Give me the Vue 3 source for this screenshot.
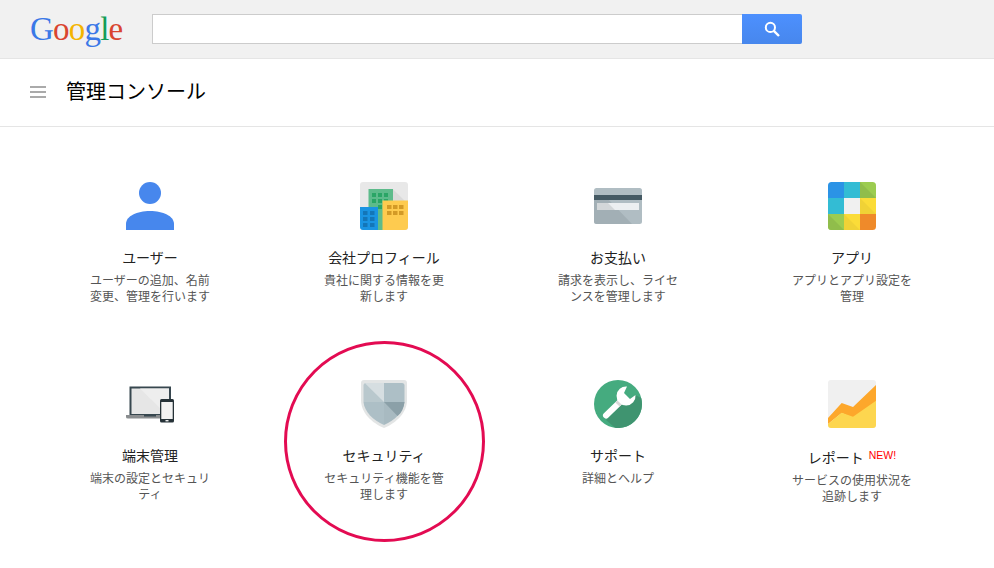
<template>
  <div class="page">
    <header class="top-bar">
      <div class="logo">
        <span class="blue">G</span><span class="red">o</span><span class="yellow">o</span><span class="blue">g</span><span class="green">l</span><span class="red">e</span>
      </div>
      <div class="search">
        <input class="search-input" type="text" />
        <button class="search-btn" type="button" aria-label="検索">
          <svg width="16" height="16" viewBox="0 0 16 16">
            <circle cx="6.4" cy="6.4" r="4.6" fill="none" stroke="#fff" stroke-width="2" />
            <path d="M9.8 9.8 L15 15" stroke="#fff" stroke-width="2.4" />
          </svg>
        </button>
      </div>
    </header>

    <div class="title-bar">
      <div class="menu-icon"><i></i><i></i><i></i></div>
      <h1 class="page-title">管理コンソール</h1>
    </div>

    <main class="grid">
      <a v-for="card in cards" :key="card.id" class="card" :class="{ highlighted: card.id === 'security' }">
        <svg class="icon" width="48" height="48" viewBox="0 0 48 48">
          <template v-if="card.id === 'users'">
            <circle cx="24" cy="11" r="11" fill="#4787ed" />
            <path d="M0 48 V42 C0 34 11 29 24 29 S48 34 48 42 V48 Z" fill="#4787ed" />
          </template>

          <template v-else-if="card.id === 'company'">
            <rect width="48" height="48" rx="3" fill="#e8e8e8" />
            <path d="M32.7 7 L48 22 V30 H30 Z" fill="#dadada" />
            <rect x="8.5" y="7" width="24.5" height="41" fill="#5dbb8b" />
            <g fill="#2aa566">
              <rect x="12" y="11" width="4" height="4" /><rect x="18" y="11" width="4" height="4" /><rect x="24" y="11" width="4" height="4" />
              <rect x="12" y="17" width="4" height="4" /><rect x="18" y="17" width="4" height="4" /><rect x="24" y="17" width="4" height="4" />
              <rect x="18" y="23" width="4" height="4" />
            </g>
            <path d="M0 25 H18 V48 H3 Q0 48 0 45 Z" fill="#1a94e2" />
            <g fill="#1376b8">
              <rect x="3" y="29" width="4.500" height="4" /><rect x="10" y="29" width="4.500" height="4" />
              <rect x="3" y="35" width="4.500" height="4" /><rect x="10" y="35" width="4.500" height="4" />
              <rect x="3" y="41" width="4.500" height="4" /><rect x="10" y="41" width="4.500" height="4" />
            </g>
            <path d="M22.500 18.500 H48 V45 Q48 48 45 48 H22.500 Z" fill="#fecb4f" />
            <g fill="#d39a26">
              <rect x="27" y="23" width="4.500" height="4" /><rect x="33" y="23" width="4.500" height="4" /><rect x="39" y="23" width="4.500" height="4" />
              <rect x="27" y="29" width="4.500" height="4" /><rect x="33" y="29" width="4.500" height="4" /><rect x="39" y="29" width="4.500" height="4" />
            </g>
          </template>

          <template v-else-if="card.id === 'billing'">
            <rect y="6" width="48" height="36" rx="2.500" fill="#b0bdc3" />
            <path d="M0 13 H10 L38 42 H3 Q0 42 0 39 Z" fill="#a2afb5" />
            <rect y="13" width="48" height="5" fill="#455a64" />
            <rect x="3" y="21" width="42" height="7" fill="#eceff1" />
            <path d="M3 21 H14 L21 28 H3 Z" fill="#d3d7d9" />
          </template>

          <template v-else-if="card.id === 'apps'">
            <clipPath id="apps-clip"><rect width="48" height="48" rx="3.500" /></clipPath>
            <g clip-path="url(#apps-clip)">
              <rect width="16" height="16" fill="#2b93e6" />
              <rect x="16" width="16" height="16" fill="#33bcd4" />
              <rect x="32" width="16" height="16" fill="#9ccc50" />
              <rect y="16" width="16" height="16" fill="#33bcd4" />
              <rect x="16" y="16" width="16" height="16" fill="#f0f0f0" />
              <rect x="32" y="16" width="16" height="16" fill="#fbdc38" />
              <rect y="32" width="16" height="16" fill="#9ccc50" />
              <rect x="16" y="32" width="16" height="16" fill="#fbdc38" />
              <rect x="32" y="32" width="16" height="16" fill="#ef8a2a" />
              <path d="M32 0 L48 16 H32 Z M0 32 L16 48 H0 Z" fill="#90bd4b" />
              <path d="M32 16 L48 32 H32 Z M16 32 L32 48 H16 Z" fill="#f0d236" />
            </g>
          </template>

          <template v-else-if="card.id === 'devices'">
            <rect x="3.500" y="6.500" width="41.500" height="29" fill="#37474f" />
            <rect x="5.500" y="8.500" width="37.500" height="25.500" fill="#e6e6e6" />
            <path d="M14 8.500 H43 V34 H40 Z" fill="#eeeeee" />
            <path d="M0 35 H38 V38.500 H2 Q0 38.500 0 37 Z" fill="#8a8d8f" />
            <rect x="18" y="35" width="12" height="1.500" fill="#37474f" />
            <rect x="34" y="19" width="14" height="23.500" rx="1.500" fill="#263238" />
            <rect x="35.300" y="22" width="11.400" height="17" fill="#f2f2f2" />
            <rect x="39.500" y="40" width="3" height="1.400" fill="#eee" />
          </template>

          <template v-else-if="card.id === 'security'">
            <path d="M4 0 H44 Q47 0 47 3 V20 C47 33 36 43 24 48 C12 43 1 33 1 20 V3 Q1 0 4 0 Z" fill="#e3e5e5" />
            <path d="M24 3 H6 Q3.500 3 3.500 5.500 V22 H24 Z" fill="#b9c8cd" />
            <path d="M5 3.300 L24 22 V3 H6 Z" fill="#d6dee1" />
            <path d="M24 3 H42 Q44.500 3 44.500 5.500 V22 H24 Z" fill="#adbfc6" />
            <path d="M3.500 22 H24 V45 C13 40 4.500 32 3.500 22 Z" fill="#adbfc6" />
            <path d="M24 22 H44.500 C43.500 32 35 40 24 45 Z" fill="#a8bac1" />
            <path d="M24 22 H44.500 C43.800 28 41.500 33 37.500 36 Z" fill="#8ba0a8" />
          </template>

          <template v-else-if="card.id === 'support'">
            <circle cx="24" cy="24" r="24" fill="#45ab7f" />
            <path d="M12 40 L27 25 L38 22 L41 15 L47.200 18 A24 24 0 0 1 21 47.800 Z" fill="#3f9470" />
            <path d="M12 35.500 L27 21" stroke="#fff" stroke-width="6" stroke-linecap="round" />
            <path d="M33 6.500 A9.500 9.500 0 1 0 41.500 15 L36 19 L30 13 Z" fill="#fff" />
            <path d="M23.500 24.500 L25.500 22.500" stroke="#d8d8d8" stroke-width="6" />
          </template>

          <template v-else>
            <rect width="48" height="48" rx="3" fill="#f0f0f0" />
            <path d="M0 38 L13.700 23 L25 27 L48 5 V22 L25 38 L13.700 33 L0 44 Z" fill="#fda72b" />
            <path d="M0 44 L13.700 32.700 L25 36.700 L48 20.700 V45 Q48 48 45 48 H3 Q0 48 0 45 Z" fill="#fdd64f" />
          </template>
        </svg>
        <h2 class="card-title" :class="{ 'has-new': card.isNew }">{{ card.title }}<sup v-if="card.isNew" class="new">NEW!</sup></h2>
        <p class="card-desc">{{ card.desc }}</p>
      </a>
    </main>
  </div>
</template>

<script setup>
const cards = [
  { id: 'users', title: 'ユーザー', desc: 'ユーザーの追加、名前変更、管理を行います' },
  { id: 'company', title: '会社プロフィール', desc: '貴社に関する情報を更新します' },
  { id: 'billing', title: 'お支払い', desc: '請求を表示し、ライセンスを管理します' },
  { id: 'apps', title: 'アプリ', desc: 'アプリとアプリ設定を管理' },
  { id: 'devices', title: '端末管理', desc: '端末の設定とセキュリティ' },
  { id: 'security', title: 'セキュリティ', desc: 'セキュリティ機能を管理します' },
  { id: 'support', title: 'サポート', desc: '詳細とヘルプ' },
  { id: 'reports', title: 'レポート', desc: 'サービスの使用状況を追跡します', isNew: true },
]
</script>

<style>
html,
body {
  margin: 0;
  background: #fff;
}
</style>

<style scoped>
.page {
  font-family: "Liberation Sans", "Noto Sans CJK JP", sans-serif;
  color: #222;
}

.top-bar {
  height: 58px;
  display: flex;
  align-items: center;
  background: #f1f1f1;
  border-bottom: 1px solid #e5e5e5;
}

.logo {
  width: 122px;
  margin-left: 30px;
  font-family: "Liberation Serif", serif;
  font-size: 33px;
  line-height: 58px;
  letter-spacing: -0.8px;
  white-space: nowrap;
}

.blue { color: #3b78e7; }
.red { color: #d9452f; }
.yellow { color: #f4b400; }
.green { color: #139d57; }

.search {
  display: flex;
  height: 30px;
}

.search-input {
  box-sizing: border-box;
  width: 590px;
  height: 30px;
  border: 1px solid #ccc;
  border-right: 0;
  background: #fff;
  outline: none;
}

.search-btn {
  width: 60px;
  height: 30px;
  padding: 0;
  display: flex;
  align-items: center;
  justify-content: center;
  border: 0;
  border-radius: 0 2px 2px 0;
  background: linear-gradient(180deg, #4d90fe, #4787ed);
}

.title-bar {
  box-sizing: border-box;
  height: 68px;
  padding-bottom: 2px;
  display: flex;
  align-items: center;
  border-bottom: 1px solid #e5e5e5;
}

.menu-icon {
  width: 16px;
  margin-left: 30px;
  display: flex;
  flex-direction: column;
  gap: 3px;
}

.menu-icon i {
  display: block;
  height: 2px;
  background: #aaa;
}

.page-title {
  margin: 0 0 2px 20px;
  font-size: 20px;
  font-weight: 400;
  color: #000;
}

.grid {
  display: grid;
  grid-template-columns: repeat(4, 234px);
  grid-auto-rows: 198px;
  padding: 55px 25px 0 33px;
}

.card {
  position: relative;
  display: flex;
  flex-direction: column;
  align-items: center;
  text-align: center;
}

.icon {
  flex: none;
  display: block;
}

.card-title {
  margin: 18px 0 0;
  font-size: 14px;
  font-weight: 400;
  line-height: 20px;
  color: #222;
}

.card-title.has-new {
  margin-top: 20px;
}

.new {
  margin-left: 5px;
  font-size: 10.5px;
  line-height: 0;
  vertical-align: 4px;
  color: #f00;
}

.card-desc {
  width: 122px;
  margin: 5px 0 0;
  font-size: 12px;
  line-height: 16px;
  color: #555;
}

.highlighted::after {
  content: "";
  position: absolute;
  left: 17px;
  top: -39px;
  box-sizing: border-box;
  width: 201px;
  height: 201px;
  border: 3px solid #e30b52;
  border-radius: 50%;
}
</style>
